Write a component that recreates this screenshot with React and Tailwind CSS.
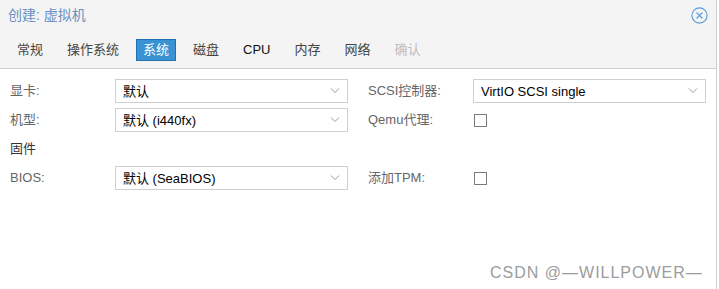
import React from 'react';

const font = { fontFamily: '"Liberation Sans", "Noto Sans CJK SC", sans-serif' };

const tabs = [
  { label: '常规' },
  { label: '操作系统' },
  { label: '系统', active: true },
  { label: '磁盘' },
  { label: 'CPU' },
  { label: '内存' },
  { label: '网络' },
  { label: '确认', disabled: true },
];

const Chevron = () => (
  <svg width="10" height="6" viewBox="0 0 10 6" fill="none" stroke="#9a9a9a" strokeWidth="1">
    <path d="M1 0.5 L5 4.5 L9 0.5" />
  </svg>
);

const Select = ({ value }) => (
  <div className="flex-1 h-[24px] border border-[#cfcfcf] bg-white flex items-center justify-between pl-[7px] pr-[7px]">
    <span className="text-[13px] text-black leading-none">{value}</span>
    <Chevron />
  </div>
);

const Checkbox = () => (
  <div className="w-[13px] h-[13px] border border-[#7a7a7a] bg-white ml-[1px]" />
);

const Field = ({ label, children, dark }) => (
  <div className="flex items-center h-[24px]">
    <span className={`w-[105px] shrink-0 text-[13px] ${dark ? 'text-[#333]' : 'text-[#666]'}`}>{label}</span>
    {children}
  </div>
);

export default function App() {
  return (
    <div className="relative w-[719px] h-[289px] bg-white overflow-hidden" style={font}>
      <div className="w-[717px] h-full border-r border-[#d0d0d0] flex flex-col">
        {/* header */}
        <div className="h-[69px] bg-[#f4f4f4] border-b border-[#d0d0d0] flex flex-col">
          <div className="h-[30px] flex items-center justify-between pl-[8px] pr-[8px]">
            <span className="text-[14px] text-[#6a8fc4]">创建: 虚拟机</span>
            <svg width="17" height="17" viewBox="0 0 17 17" fill="none" stroke="#5a9ad6" strokeWidth="1.1">
              <circle cx="8.5" cy="8.5" r="7.6" />
              <path d="M5.5 5.5 L11.5 11.5 M11.5 5.5 L5.5 11.5" />
            </svg>
          </div>
          <div className="flex items-center gap-[10px] pl-[10px] mt-[9px]">
            {tabs.map((t) => (
              <div
                key={t.label}
                className={`h-[22px] px-[6px] flex items-center border text-[13px] ${
                  t.active
                    ? 'bg-[#3892d4] border-[#1f6fb2] text-white'
                    : t.disabled
                    ? 'border-transparent text-[#bdbdbd]'
                    : t.label === 'CPU'
                    ? 'border-transparent text-[#111]'
                    : 'border-transparent text-[#444]'
                }`}
              >
                {t.label}
              </div>
            ))}
          </div>
        </div>

        {/* body */}
        <div className="flex gap-[20px] pl-[10px] pt-[10px]">
          <div className="w-[338px] flex flex-col gap-[5px]">
            <Field label="显卡:">
              <Select value="默认" />
            </Field>
            <Field label="机型:">
              <Select value="默认 (i440fx)" />
            </Field>
            <Field label="固件" dark />
            <Field label="BIOS:">
              <Select value="默认 (SeaBIOS)" />
            </Field>
          </div>
          <div className="w-[338px] flex flex-col gap-[5px]">
            <Field label="SCSI控制器:">
              <Select value="VirtIO SCSI single" />
            </Field>
            <Field label="Qemu代理:">
              <Checkbox />
            </Field>
            <div className="h-[24px]" />
            <Field label="添加TPM:">
              <Checkbox />
            </Field>
          </div>
        </div>
      </div>

      <span className="absolute left-[490px] top-[261px] text-[16px] text-[#9c9c9c] tracking-[1px]">
        CSDN @—WILLPOWER—
      </span>
    </div>
  );
}
